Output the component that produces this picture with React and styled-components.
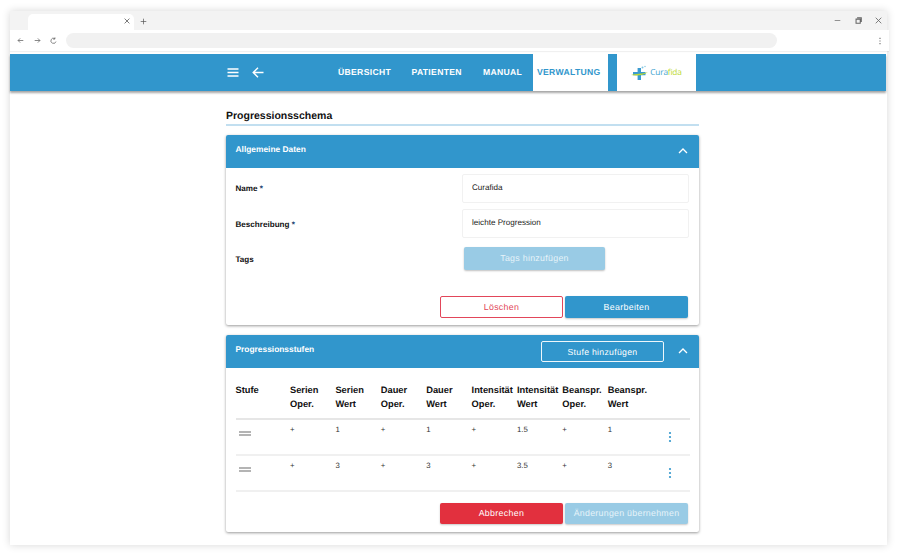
import React from "react";
import styled, { createGlobalStyle } from "styled-components";

const Global = createGlobalStyle`
  html, body { margin: 0; padding: 0; background: #fff; width: 905px; height: 555px; overflow: hidden; }
  * { box-sizing: border-box; }
  body { font-family: "Liberation Sans", Arial, sans-serif; color: #111; text-rendering: geometricPrecision; }
  button { text-rendering: geometricPrecision; }
`;
const blue = "#3196cc";
const Window = styled.div`
  margin: 11px 0 0 10px; width: 877px; height: 534px; background: #fff;
  box-shadow: 0 0 8px rgba(0,0,0,.16); display: flex; flex-direction: column;
`;
const TabStrip = styled.div`height: 19px; background: #f3f3f3; display: flex; align-items: flex-end; padding-left: 18px; color: #555;`;
const Tab = styled.div`
  width: 106px; height: 16px; background: #fff; border-radius: 5px 5px 0 0; display: flex;
  justify-content: flex-end; align-items: center; padding: 0 4px 2px 0;
`;
const NewTab = styled.div`height: 16px; display: flex; align-items: center; margin-left: 6px; padding-bottom: 2px;`;
const WinControls = styled.div`margin-left: auto; height: 19px; display: flex; align-items: center; gap: 13.5px; padding: 0 5px 1px 0; color: #666;`;
const Toolbar = styled.div`
  width: 879px; height: 21px; background: #fff; display: flex; align-items: center; padding-left: 7px; gap: 9.5px; color: #666;
  box-shadow: 0 1px 1px rgba(0,0,0,.06);
`;
const Address = styled.div`width: 711px; height: 15px; background: #f1f1f1; border-radius: 8px; margin-left: -1px; margin-right: 90px;`;
const Nav = styled.nav`
  margin-top: 3px; width: 876px; height: 37px; background: ${blue}; flex: none; display: flex; align-items: stretch;
  box-shadow: 0 1.5px 2px rgba(0,0,0,.35); padding-left: 217px;
`;
const NavIcons = styled.div`display: flex; align-items: center; gap: 13px; width: 111px; color: #fff;`;
const NavItem = styled.div`
  display: flex; align-items: center; font-size: 8.6px; font-weight: 700; letter-spacing: .32px; height: 37px;
  color: ${p => p.$active ? blue : "#fff"}; background: ${p => p.$active ? "#fff" : "transparent"};
  width: ${p => p.$w}px; padding-left: ${p => p.$pl || 0}px; padding-bottom: 1px;
`;
const LogoBox = styled.div`width: 79px; margin-left: 9px; background: #fff; display: flex; align-items: center; justify-content: center; gap: 2px;`;
const LogoText = styled.span`font-size: 8.3px; color: #3fa3cf; font-family: "Open Sans", sans-serif; letter-spacing: -.2px;`;
const LogoAccent = styled.span`color: #bcd92f;`;
const Main = styled.main`padding: 17.5px 0 0 216px;`;
const Column = styled.div`width: 473px; display: flex; flex-direction: column;`;
const Title = styled.h1`
  margin: 0 0 9px; font-size: 10.5px; line-height: 15px; font-weight: 700; padding: 0 0 .5px; border-bottom: 2px solid #c2dff0; color: #111;
`;
const Card = styled.section`
  background: #fff; border-radius: 2px; box-shadow: 0 1px 3px rgba(0,0,0,.4); display: flex; flex-direction: column;
  height: ${p => p.$h}px; margin-bottom: 10px;
`;
const CardHeader = styled.header`
  height: 33px; flex: none; background: ${blue}; color: #fff; border-radius: 2px 2px 0 0; display: flex; align-items: center;
  padding: 0 10px 6px 9.5px; font-size: 8.4px; font-weight: 700;
`;
const HeaderTitle = styled.span`margin-right: auto;`;
const Chevron = styled.svg`width: 12px; height: 12px; margin-top: 4px; margin-left: 13px; fill: none; stroke: #fff; stroke-width: 1.3;`;
const OutlineWhite = styled.button`
  width: 123px; height: 21.5px; border: 1px solid #eef7fb; border-radius: 2px; background: transparent; color: #fff; font: 400 8.7px "Liberation Sans", sans-serif; letter-spacing: .3px; margin-top: 6px; padding: 0;
`;
const FormBody = styled.div`padding: 6px 9.5px 0 9.5px; flex: 1; display: flex; flex-direction: column;`;
const FormRow = styled.div`display: grid; grid-template-columns: 226.5px 227px; height: ${p => p.$h}px; align-items: start;`;
const Label = styled.label`font-size: 8.1px; font-weight: 700; padding-top: ${p => p.$pt}px; color: #111;`;
const Req = styled.span`color: #1a3d6e;`;
const Field = styled.div`height: 29px; border: 1px solid #f1f1f1; border-radius: 2px; padding: 0 9px 2px; font-size: 8.1px; color: #222; display: flex; align-items: center;`;
const TagButton = styled.button`
  width: 141px; height: 23px; margin: 2px 0 0 2px; background: #99cbe5; color: #e6f3f9; border: 0; border-radius: 2px; font: 400 8.8px "Liberation Sans", sans-serif; letter-spacing: .3px;
  box-shadow: 0 1px 2px rgba(0,0,0,.25); padding: 0 0 2px;
`;
const Actions = styled.div`display: flex; justify-content: flex-end; gap: 2px; padding-right: 1.5px; margin-top: ${p => p.$mt}px;`;
const ActionButton = styled.button`
  width: 123px; height: 21.5px; border-radius: 2px; font: 400 8.8px "Liberation Sans", sans-serif; letter-spacing: ${p => p.$ls ?? .35}px; padding: 0;
  background: ${p => p.$bg}; color: ${p => p.$color}; border: ${p => p.$border || "0"};
  box-shadow: ${p => p.$flat ? "none" : "0 1px 2px rgba(0,0,0,.22)"};
`;
const TableBody = styled.div`padding: 15px 9.5px 0;`;
const Grid = styled.div`display: grid; grid-template-columns: 54.5px repeat(8, 45.4px) 1fr;`;
const HeaderGrid = styled(Grid)`height: 37px; border-bottom: 2px solid #e6e6e6; font-size: 9.3px; font-weight: 700; line-height: 14px; color: #111;`;
const RowGrid = styled(Grid)`height: 36px; border-bottom: 2px solid #f0f0f0; font-size: 7.8px; color: #333; padding-top: 4px; line-height: 11px;`;
const Head = styled.div`white-space: nowrap;`;
const Drag = styled.div`width: 12px; height: 5px; margin: 7px 0 0 3px; border-top: 2px solid #b4b4b4; border-bottom: 2px solid #b4b4b4;`;
const Kebab = styled.svg`width: 4px; height: 12px; fill: ${blue}; margin: 7px 0 0 15px; display: block;`;

const Stroke = styled.svg`display: block; fill: none; stroke: currentColor;`;
const I = ({ s = 8, w = 1, d }) => <Stroke width={s} height={s} viewBox="0 0 10 10" strokeWidth={w}><path d={d} /></Stroke>;

function TableRow({ vals }) {
  return (
    <RowGrid>
      <div><Drag /></div>
      {vals.map((v, i) => <div key={i}>{v}</div>)}
      <div><Kebab viewBox="0 0 4 12"><circle cx="2" cy="2" r="1.1" /><circle cx="2" cy="6" r="1.1" /><circle cx="2" cy="10" r="1.1" /></Kebab></div>
    </RowGrid>
  );
}
const heads = [["Stufe",""],["Serien","Oper."],["Serien","Wert"],["Dauer","Oper."],["Dauer","Wert"],["Intensität","Oper."],["Intensität","Wert"],["Beanspr.","Oper."],["Beanspr.","Wert"]];

const Up = () => <Chevron viewBox="0 0 12 12"><path d="M2 8l4-4 4 4" /></Chevron>;

export default function App() {
  return (
    <>
      <Global />
      <Window>
        <TabStrip>
          <Tab><I s={6} w={1.3} d="M1 1l8 8M9 1l-8 8" /></Tab>
          <NewTab><I s={7} w={1} d="M5 1v8M1 5h8" /></NewTab>
          <WinControls>
            <I s={7} w={1} d="M1 5h8" />
            <I s={7} w={1.5} d="M1.5 3h6v6h-6zM3 1h6v6" />
            <I s={7} w={1.2} d="M1 1l8 8M9 1l-8 8" />
          </WinControls>
        </TabStrip>
        <Toolbar>
          <I s={7} w={1.1} d="M9 5H1.5M4.5 2L1.5 5l3 3" />
          <I s={7} w={1.1} d="M1 5h7.5M5.5 2l3 3-3 3" />
          <I s={7} w={1.1} d="M8.5 6.5A3.7 3.7 0 1 1 7 2.3M7 .5v2.5h-2.5" />
          <Address />
          <I s={8} w={1.3} d="M5 1v1.4M5 4.3v1.4M5 7.6V9" />
        </Toolbar>
        <Nav>
          <NavIcons>
            <Stroke width="12" height="9" viewBox="0 0 12 9" strokeWidth="1.4"><path d="M.5 1h11M.5 4.5h11M.5 8h11" /></Stroke>
            <Stroke width="12" height="11" viewBox="0 0 12 11" strokeWidth="1.4"><path d="M11.5 5.5H1.2M6 .8L1.2 5.5 6 10.2" /></Stroke>
          </NavIcons>
          <NavItem $w={73.5}>ÜBERSICHT</NavItem>
          <NavItem $w={71.5}>PATIENTEN</NavItem>
          <NavItem $w={49.5}>MANUAL</NavItem>
          <NavItem $active $w={75.5} $pl={4.5}>VERWALTUNG</NavItem>
          <LogoBox>
            <svg width="17" height="16" viewBox="0 0 17 16">
              <path d="M6.6 3h3.4v4h4.5v3.2h-4.5V15H6.600v-4.800H2V7h4.600z" fill="#3a9bd0" />
              <path d="M0 10C5 8.300 11 9.300 17 7 12 10.700 5 11 0 10z" fill="#bcd92f" />
              <circle cx="11.500" cy="2.500" r="1" fill="#7fc4e0" /><circle cx="14" cy="1.500" r=".7" fill="#7fc4e0" />
            </svg>
            <LogoText>Cura<LogoAccent>fida</LogoAccent></LogoText>
          </LogoBox>
        </Nav>
        <Main>
          <Column>
            <Title>Progressionsschema</Title>
            <Card $h={190}>
              <CardHeader><HeaderTitle>Allgemeine Daten</HeaderTitle><Up /></CardHeader>
              <FormBody>
                <FormRow $h={35}><Label $pt={10}>Name <Req>*</Req></Label><Field>Curafida</Field></FormRow>
                <FormRow $h={36}><Label $pt={11}>Beschreibung <Req>*</Req></Label><Field>leichte Progression</Field></FormRow>
                <FormRow $h={35.5}><Label $pt={10}>Tags</Label><TagButton>Tags hinzufügen</TagButton></FormRow>
                <Actions $mt={15.5}>
                  <ActionButton $bg="#fff" $color="#e2465a" $border="1px solid #e2465a" $flat>Löschen</ActionButton>
                  <ActionButton $bg={blue} $color="#fff">Bearbeiten</ActionButton>
                </Actions>
              </FormBody>
            </Card>
            <Card $h={197}>
              <CardHeader>
                <HeaderTitle>Progressionsstufen</HeaderTitle>
                <OutlineWhite>Stufe hinzufügen</OutlineWhite>
                <Up />
              </CardHeader>
              <TableBody>
                <HeaderGrid>
                  {heads.map((h, i) => <Head key={i}>{h[0]}<br />{h[1]}</Head>)}
                </HeaderGrid>
                <TableRow vals={["+", "1", "+", "1", "+", "1.5", "+", "1"]} />
                <TableRow vals={["+", "3", "+", "3", "+", "3.5", "+", "3"]} />
                <Actions $mt={10.5}>
                  <ActionButton $bg="#e2303e" $color="#fff">Abbrechen</ActionButton>
                  <ActionButton $bg="#99cbe5" $color="#e6f3f9" $ls={.28}>Änderungen übernehmen</ActionButton>
                </Actions>
              </TableBody>
            </Card>
          </Column>
        </Main>
      </Window>
    </>
  );
}
